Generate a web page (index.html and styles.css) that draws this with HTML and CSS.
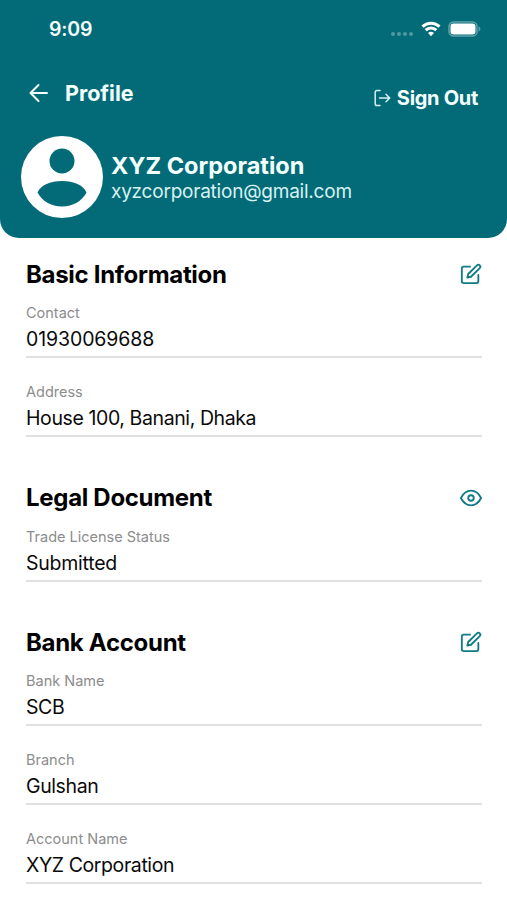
FILE: index.html
```html
<!DOCTYPE html>
<html lang="en">
<head>
<meta charset="utf-8">
<title>Profile</title>
<link rel="stylesheet" href="styles.css">
</head>
<body>
<svg class="defs" width="0" height="0">
  <symbol id="edit" viewBox="0 0 24 24"><path d="M11 4H4a2 2 0 0 0-2 2v14a2 2 0 0 0 2 2h14a2 2 0 0 0 2-2v-7M18.500 2.500a2.120 2.120 0 0 1 3 3L12 15l-4 1 1-4z"/></symbol>
  <symbol id="eye" viewBox="0 0 24 24"><path d="M1 12C3.500 7 7.500 4 12 4s8.500 3 11 8c-2.500 5-6.500 8-11 8S3.500 17 1 12z"/><circle cx="12" cy="12" r="3"/></symbol>
</svg>
<header class="header">
  <div class="status">
    <span class="time">9:09</span>
    <div class="indicators">
      <svg class="dots" viewBox="0 0 24 6"><circle cx="3" cy="3" r="2"/><circle cx="9" cy="3" r="2"/><circle cx="15" cy="3" r="2"/><circle cx="21" cy="3" r="2"/></svg>
      <svg class="wifi" viewBox="0 0 20 16"><path d="M1.500 5.700a12.300 12.300 0 0 1 17 0M4.700 9.200a7.600 7.600 0 0 1 10.600 0"/><path class="wifi-core" d="M10 15.200 7 12.100a4.300 4.300 0 0 1 6 0z"/></svg>
      <svg class="battery" viewBox="0 0 33 16"><rect class="shell" x="1" y="1" width="28" height="14" rx="4.500"/><rect class="charge" x="2.500" y="2.500" width="25" height="11" rx="3"/><path class="shell-tip" d="M30.500 5.500c2.500.8 2.500 4.200 0 5z"/></svg>
    </div>
  </div>
  <nav class="nav">
    <div class="back">
      <svg class="arrow" viewBox="0 0 20 20"><path d="M18 10H1.500M9.500 2 1.500 10l8 8"/></svg>
      <h1>Profile</h1>
    </div>
    <div class="signout">
      <svg class="exit" viewBox="0 0 17 18"><path d="M6 1.500H3A1.800 1.800 0 0 0 1.200 3.300v11.400A1.800 1.800 0 0 0 3 16.500h3M5.500 9h10M12 5.300 15.700 9 12 12.700"/></svg>
      <span>Sign Out</span>
    </div>
  </nav>
  <div class="account">
    <svg class="avatar" viewBox="0 0 82 82"><circle class="disc" cx="41" cy="41" r="41"/><circle cx="41" cy="25" r="12.500"/><path d="M16.500 56.500C20 49 29 45 41 45s21 4 24.500 11.500C61 65 52 70.500 41 70.500S21 65 16.500 56.500z"/></svg>
    <div class="identity">
      <h2>XYZ Corporation</h2>
      <p>xyzcorporation@gmail.com</p>
    </div>
  </div>
</header>
<main class="content">
  <section>
    <div class="heading"><h3>Basic Information</h3><svg class="icon"><use href="#edit"/></svg></div>
    <div class="fields">
      <div class="field"><span class="label">Contact</span><span class="value number">01930069688</span></div>
      <div class="field"><span class="label">Address</span><span class="value">House 100, Banani, Dhaka</span></div>
    </div>
  </section>
  <section>
    <div class="heading"><h3>Legal Document</h3><svg class="icon"><use href="#eye"/></svg></div>
    <div class="fields">
      <div class="field"><span class="label">Trade License Status</span><span class="value status-value">Submitted</span></div>
    </div>
  </section>
  <section>
    <div class="heading"><h3>Bank Account</h3><svg class="icon"><use href="#edit"/></svg></div>
    <div class="fields">
      <div class="field"><span class="label">Bank Name</span><span class="value">SCB</span></div>
      <div class="field"><span class="label">Branch</span><span class="value">Gulshan</span></div>
      <div class="field"><span class="label">Account Name</span><span class="value">XYZ Corporation</span></div>
    </div>
  </section>
</main>
</body>
</html>
```
FILE: styles.css
```css
* { box-sizing: border-box; margin: 0; padding: 0; }
body { font-family: Inter, sans-serif; background: #fff; color: #0a0a0a; height: 900px; overflow: hidden; }
svg { display: block; flex: none; fill: none; stroke-linecap: round; stroke-linejoin: round; }
.defs { position: absolute; }
.header { height: 238px; background: #036b77; border-radius: 0 0 19px 19px; color: #f4ffff; }
.status { height: 58px; padding: 0 26px 0 49px; display: flex; align-items: center; justify-content: space-between; }
.time { font-size: 19.5px; font-weight: 600; letter-spacing: -0.2px; }
.indicators { display: flex; align-items: center; }
.dots { width: 24px; height: 6px; margin: 9px 7px 0 0; fill: #4e98a1; }
.wifi { width: 20px; height: 16px; margin-right: 7px; stroke: #fff; stroke-width: 3; stroke-linecap: butt; }
.wifi-core { fill: #fff; stroke: none; }
.battery { width: 33px; height: 16px; }
.shell { stroke: #5da2aa; stroke-width: 1.5; }
.charge { fill: #fff; }
.shell-tip { fill: #5da2aa; }
.nav { height: 70px; padding: 0 29px; display: flex; justify-content: space-between; align-items: center; }
.back { display: flex; align-items: center; gap: 16px; }
.arrow { width: 20px; height: 20px; stroke: #f4ffff; stroke-width: 2; }
h1 { font-size: 21.5px; font-weight: 650; line-height: 28px; }
.signout { display: flex; align-items: center; gap: 6px; margin-top: 9px; font-size: 20px; font-weight: 650; line-height: 26px; letter-spacing: -0.3px; }
.exit { width: 17px; height: 18px; stroke: #d5f2f4; stroke-width: 1.5; }
.account { display: flex; gap: 8px; padding: 8px 21px 0; }
.avatar { width: 82px; height: 82px; fill: #036b77; }
.disc { fill: #fff; }
.identity { padding-top: 16px; }
h2 { font-size: 23.5px; font-weight: 650; line-height: 27px; }
.identity p { font-size: 19px; line-height: 25px; letter-spacing: -0.22px; color: #d8f1f3; }
.content { padding: 21px 25px 0 26px; display: flex; flex-direction: column; gap: 45.5px; }
.heading { height: 30px; display: flex; align-items: center; justify-content: space-between; margin-bottom: 15px; }
h3 { font-size: 24px; font-weight: 700; line-height: 30px; padding-top: 1px; letter-spacing: -0.3px; color: #000; }
.icon { width: 22px; height: 22px; stroke: #117a84; stroke-width: 2; }
.fields { display: flex; flex-direction: column; gap: 25px; }
.field { height: 54px; display: flex; flex-direction: column; border-bottom: 2px solid #e0e0e0; }
.label { font-size: 14.5px; line-height: 18px; margin-bottom: 4px; color: #8c8c8c; }
.value { font-size: 19.5px; line-height: 26px; letter-spacing: -0.4px; }
.number { letter-spacing: -0.1px; }
.status-value { letter-spacing: -0.25px; }
```
